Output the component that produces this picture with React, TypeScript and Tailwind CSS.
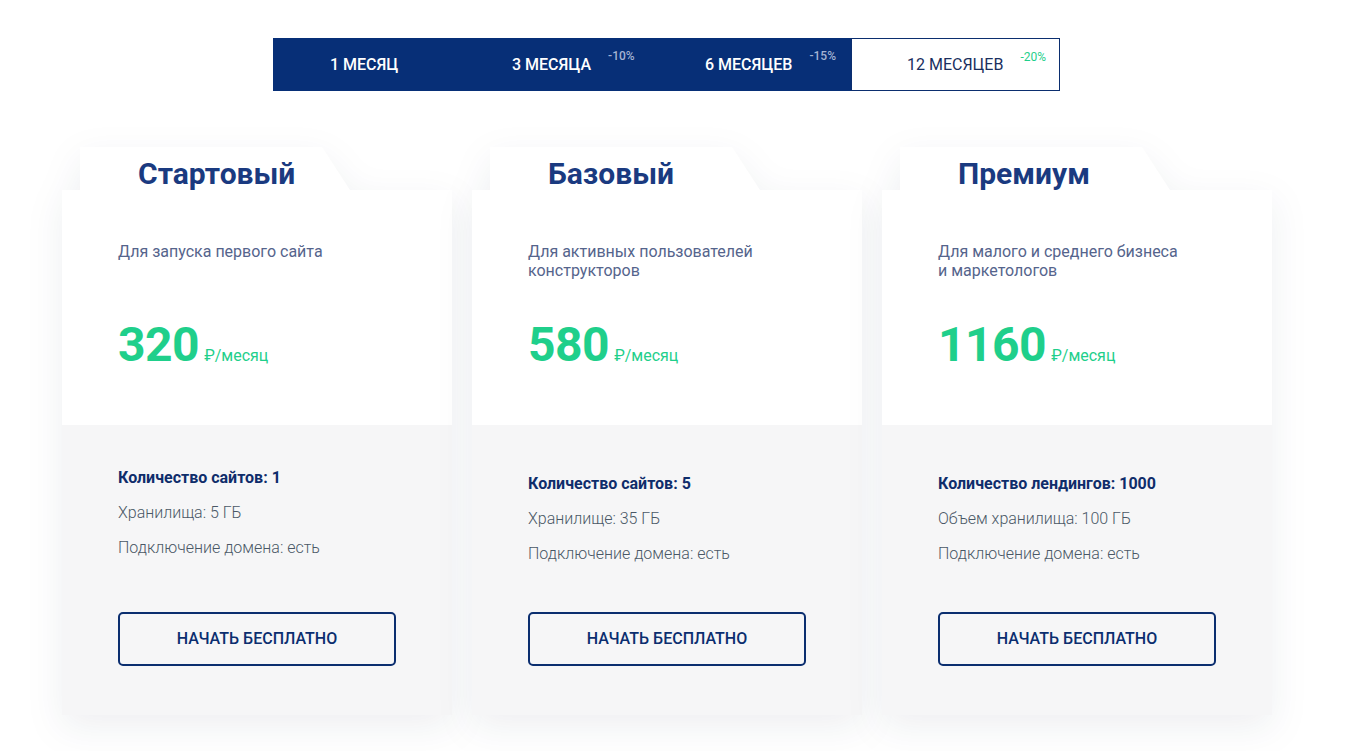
import { useState } from "react"

type Period = { label: string; badge?: string; pl: string; width: string }

const periods: Period[] = [
  { label: "1 МЕСЯЦ", pl: "pl-[57px]", width: "w-[197px]" },
  { label: "3 МЕСЯЦА", badge: "-10%", pl: "pl-[42px]", width: "w-[197px]" },
  { label: "6 МЕСЯЦЕВ", badge: "-15%", pl: "pl-[38px]", width: "w-[184px]" },
  { label: "12 МЕСЯЦЕВ", badge: "-20%", pl: "pl-[55px]", width: "w-[209px]" },
]

type Plan = {
  title: string
  desc: string[]
  price: string
  features: string[]
  top: string
}

const plans: Plan[] = [
  {
    title: "Стартовый",
    desc: ["Для запуска первого сайта"],
    price: "320",
    features: ["Количество сайтов: 1", "Хранилища: 5 ГБ", "Подключение домена: есть"],
    top: "pt-[43px]",
  },
  {
    title: "Базовый",
    desc: ["Для активных пользователей", "конструкторов"],
    price: "580",
    features: ["Количество сайтов: 5", "Хранилище: 35 ГБ", "Подключение домена: есть"],
    top: "pt-[49px]",
  },
  {
    title: "Премиум",
    desc: ["Для малого и среднего бизнеса", "и маркетологов"],
    price: "1160",
    features: ["Количество лендингов: 1000", "Объем хранилища: 100 ГБ", "Подключение домена: есть"],
    top: "pt-[49px]",
  },
]

const PlanCard = ({ plan }: { plan: Plan }) => (
  <div className="w-[390px] flex flex-col drop-shadow-[0_12px_18px_rgba(20,30,60,0.07)]">
    <div className="h-[43px] ml-[18px] w-[270px] bg-white pt-[12px] pl-[58px] [clip-path:polygon(0_0,242px_0,270px_100%,0_100%)]">
      <span className="text-[30px] leading-[30px] font-bold text-[#1a3a80]">{plan.title}</span>
    </div>
    <div className="bg-white h-[235px] pt-[52px] px-[56px]">
      <div className="h-[79px] text-[16px] leading-[19px] text-[#55648c]">
        {plan.desc.map((d) => (
          <div key={d}>{d}</div>
        ))}
      </div>
      <div className="flex items-baseline text-[#1fcf8b]">
        <span className="text-[48px] leading-[48px] font-bold tracking-[-0.5px]">{plan.price}</span>
        <span className="text-[16px] ml-[5px]">₽/месяц</span>
      </div>
    </div>
    <div className={`bg-[#f6f6f7] h-[290px] px-[56px] pb-[49px] flex flex-col ${plan.top}`}>
      <div className="flex flex-col gap-[15px] text-[16px] leading-[20px]">
        {plan.features.map((f, i) => (
          <div key={f} className={i === 0 ? "font-bold text-[#0f2d6b]" : "font-light text-[#4a5866]"}>
            {f}
          </div>
        ))}
      </div>
      <button className="mt-auto w-[278px] h-[54px] border-2 border-[#0b2e6f] rounded-[5px] text-[16px] font-medium text-[#0b2e6f]">
        НАЧАТЬ БЕСПЛАТНО
      </button>
    </div>
  </div>
)

export default function App() {
  const [active, setActive] = useState(3)

  return (
    <div className="min-h-[751px] bg-white font-['Roboto',sans-serif]">
      <div className="pt-[38px] pl-[273px] flex">
        {periods.map((p, i) => {
          const on = i === active
          return (
            <button
              key={p.label}
              onClick={() => setActive(i)}
              className={`h-[53px] flex items-center ${p.width} ${p.pl} ${
                on ? "bg-white border border-[#0b2e6f] text-[#1a2f5e] font-normal" : "bg-[#072f77] text-white font-medium"
              }`}
            >
              <span className="text-[16px]">{p.label}</span>
              {p.badge && (
                <span
                  className={`self-start mt-[11px] ml-[17px] text-[12px] leading-[14px] ${
                    on ? "text-[#1fcf8b]" : "text-[#a4b3d3]"
                  }`}
                >
                  {p.badge}
                </span>
              )}
            </button>
          )
        })}
      </div>
      <div className="pt-[56px] pl-[62px] flex gap-[20px]">
        {plans.map((plan) => (
          <PlanCard key={plan.title} plan={plan} />
        ))}
      </div>
    </div>
  )
}
